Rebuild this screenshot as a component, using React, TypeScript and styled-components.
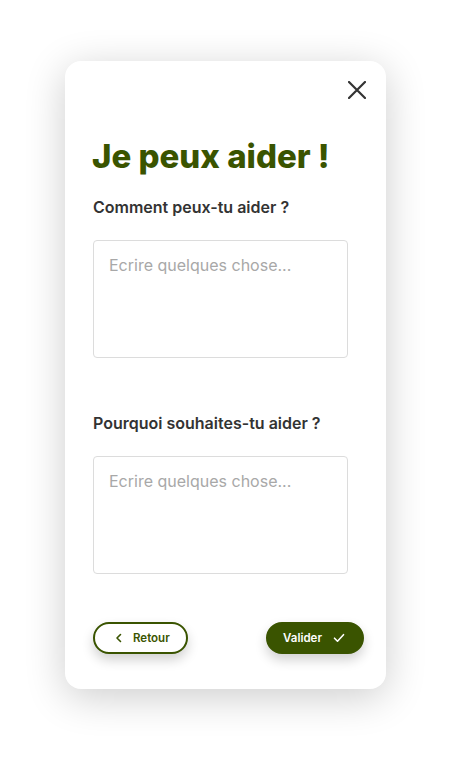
import * as React from 'react';
import styled, { createGlobalStyle } from 'styled-components';

const GREEN = '#3a5400';

const GlobalStyle = createGlobalStyle`
  html, body {
    margin: 0;
    padding: 0;
    background: #ffffff;
    font-family: Inter, "Noto Sans", sans-serif;
  }
`;

const Page = styled.div`
  display: flex;
  justify-content: center;
  padding-top: 61px;
  min-height: 758px;
  box-sizing: border-box;
`;

const Card = styled.div`
  width: 321px;
  height: 628px;
  box-sizing: border-box;
  background: #fff;
  border-radius: 16px;
  box-shadow: 0 8px 40px rgba(0, 0, 0, 0.2);
  padding: 20px 20px 0 28px;
  display: flex;
  flex-direction: column;
`;

const Header = styled.div`
  display: flex;
  justify-content: flex-end;
`;

const CloseButton = styled.button`
  border: none;
  background: none;
  padding: 0;
  width: 18px;
  height: 18px;
  cursor: pointer;
  display: flex;
`;

const Title = styled.h1`
  margin: 38px 0 0 -1px;
  font-size: 33px;
  font-weight: 800;
  line-height: 38px;
  color: ${GREEN};
`;

const Field = styled.div<{ $top: number }>`
  margin-top: ${(p) => p.$top}px;
  display: flex;
  flex-direction: column;
  width: 255px;
`;

const Label = styled.label`
  font-size: 16px;
  font-weight: 600;
  line-height: 20px;
  color: #333;
`;

const TextArea = styled.textarea`
  margin-top: 23px;
  height: 118px;
  box-sizing: border-box;
  border: 1px solid #dcdcdc;
  border-radius: 4px;
  padding: 14px 15px;
  font-family: Inter, sans-serif;
  font-size: 16px;
  line-height: 20px;
  resize: none;
  outline: none;
  &::placeholder {
    color: #a8a8a8;
  }
`;

const Actions = styled.div`
  margin-top: 48px;
  display: flex;
  justify-content: space-between;
  align-items: center;
  padding-right: 2px;
`;

const PillButton = styled.button<{ $filled?: boolean }>`
  display: flex;
  align-items: center;
  gap: ${(p) => (p.$filled ? '11px' : '10px')};
  height: 32px;
  box-sizing: border-box;
  padding: ${(p) => (p.$filled ? '0 17px 0 15px' : '0 16px 0 20px')};
  border-radius: 16px;
  border: 2px solid ${GREEN};
  background: ${(p) => (p.$filled ? GREEN : '#fff')};
  color: ${(p) => (p.$filled ? '#fff' : GREEN)};
  font-family: Inter, sans-serif;
  font-size: 11.5px;
  font-weight: 600;
  cursor: pointer;
  box-shadow: 0 6px 12px rgba(0, 0, 0, 0.18);
`;

export default function App() {
  return (
    <>
      <GlobalStyle />
      <Page>
        <Card>
          <Header>
            <CloseButton aria-label="Fermer">
              <svg width="18" height="18" viewBox="0 0 18 18">
                <path d="M1 1L17 17M17 1L1 17" stroke="#333" strokeWidth="2.2" strokeLinecap="round" />
              </svg>
            </CloseButton>
          </Header>
          <Title>Je peux aider !</Title>
          <Field $top={22}>
            <Label>Comment peux-tu aider ?</Label>
            <TextArea placeholder="Ecrire quelques chose..." />
          </Field>
          <Field $top={55}>
            <Label>Pourquoi souhaites-tu aider ?</Label>
            <TextArea placeholder="Ecrire quelques chose..." />
          </Field>
          <Actions>
            <PillButton>
              <svg width="8" height="10" viewBox="0 0 8 10">
                <path d="M5.5 1.5L2 5l3.5 3.5" stroke={GREEN} strokeWidth="1.6" fill="none" strokeLinecap="round" strokeLinejoin="round" />
              </svg>
              Retour
            </PillButton>
            <PillButton $filled>
              Valider
              <svg width="12" height="10" viewBox="0 0 12 10">
                <path d="M1.5 5.2l3 3 6-6.5" stroke="#fff" strokeWidth="1.6" fill="none" strokeLinecap="round" strokeLinejoin="round" />
              </svg>
            </PillButton>
          </Actions>
        </Card>
      </Page>
    </>
  );
}
